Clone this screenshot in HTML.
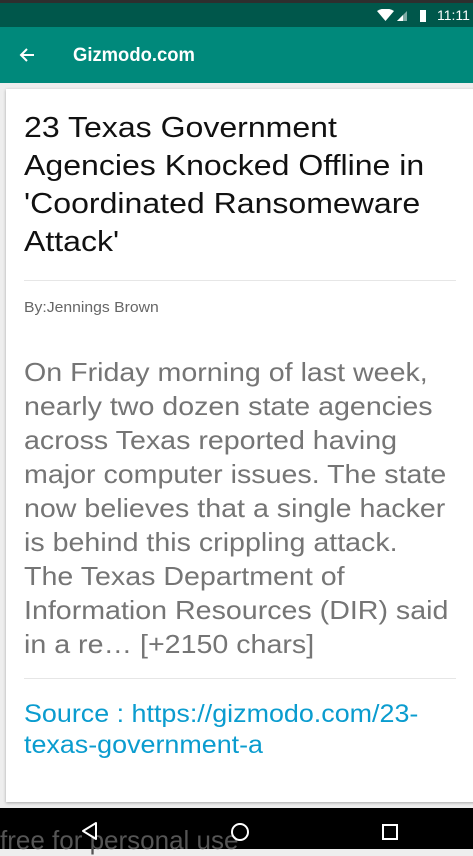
<!DOCTYPE html>
<html><head><meta charset="utf-8"><style>
*{margin:0;padding:0;box-sizing:border-box}
body{width:473px;height:849px;overflow:hidden;background:#eeeeee;font-family:"Liberation Sans",Roboto,sans-serif;position:relative}
.a{position:absolute;white-space:nowrap;transform-origin:0 0}
.t{left:24px;font-size:29px;color:#111;transform:scaleX(1.105)}
.b{left:24px;font-size:26px;color:#757575;transform:scaleX(1.1)}
.s{left:24px;font-size:25px;color:#0a9ccf;transform:scaleX(1.075)}
</style></head><body>
<div class="a" style="left:0;top:0;width:473px;height:3px;background:#2e2e2e"></div>
<div class="a" style="left:0;top:3px;width:473px;height:24px;background:#00574b"></div>
<svg class="a" style="left:377px;top:9px" width="60" height="14" viewBox="0 0 60 14">
<path d="M0 2 Q8.5 -3 17 2 L8.5 12 Z" fill="#fff"/>
<path d="M20 12 L30 2 L30 12 Z" fill="#fff" opacity="0.5"/><path d="M20 12 L26 6 L26 12 Z" fill="#fff"/>
<rect x="43" y="1" width="6" height="12" fill="#fff"/>
</svg>
<div class="a" style="left:437px;top:7px;font-size:14px;color:#fff">11:11</div>
<div class="a" style="left:0;top:27px;width:473px;height:56px;background:#00897b"></div>
<svg class="a" style="left:18px;top:46px" width="18" height="18" viewBox="0 0 18 18"><path d="M16 9H3M9 3L3 9l6 6" stroke="#fff" stroke-width="2" fill="none"/></svg>
<div class="a" style="left:73px;top:45px;font-size:19px;font-weight:bold;color:#fff;transform:scaleX(0.97)">Gizmodo.com</div>
<div class="a" style="left:6px;top:89px;width:480px;height:713px;background:#fff;box-shadow:0 1px 3px rgba(0,0,0,.3)"></div>
<div class="a t" style="top:112px">23 Texas Government</div>
<div class="a t" style="top:150px">Agencies Knocked Offline in</div>
<div class="a t" style="top:188px">'Coordinated Ransomeware</div>
<div class="a t" style="top:226px">Attack'</div>
<div class="a" style="left:24px;top:280px;width:432px;height:1px;background:#e6e6e6"></div>
<div class="a" style="left:24px;top:299px;font-size:15px;color:#666;transform:scaleX(1.05)">By:Jennings Brown</div>
<div class="a b" style="top:357px">On Friday morning of last week,</div>
<div class="a b" style="top:391px">nearly two dozen state agencies</div>
<div class="a b" style="top:425px">across Texas reported having</div>
<div class="a b" style="top:459px">major computer issues. The state</div>
<div class="a b" style="top:493px">now believes that a single hacker</div>
<div class="a b" style="top:527px">is behind this crippling attack.</div>
<div class="a b" style="top:561px">The Texas Department of</div>
<div class="a b" style="top:595px">Information Resources (DIR) said</div>
<div class="a b" style="top:629px">in a re… [+2150 chars]</div>
<div class="a" style="left:24px;top:678px;width:432px;height:1px;background:#e6e6e6"></div>
<div class="a s" style="top:700px">Source : https://gizmodo.com/23-</div>
<div class="a s" style="top:731px">texas-government-a</div>
<div class="a" style="left:0;top:808px;width:473px;height:41px;background:#000"></div>
<div class="a" style="left:0;top:825px;font-size:26px;color:#555">free for personal use</div>
<svg class="a" style="left:78px;top:820px" width="330" height="22" viewBox="0 0 330 22">
<path d="M18 3 L5 11 L18 19 Z" stroke="#fff" stroke-width="2" fill="none" stroke-linejoin="round"/>
<circle cx="162" cy="12" r="8" stroke="#fff" stroke-width="2" fill="none"/>
<rect x="305" y="5" width="14" height="14" stroke="#fff" stroke-width="2" fill="none"/>
</svg>
</body></html>
